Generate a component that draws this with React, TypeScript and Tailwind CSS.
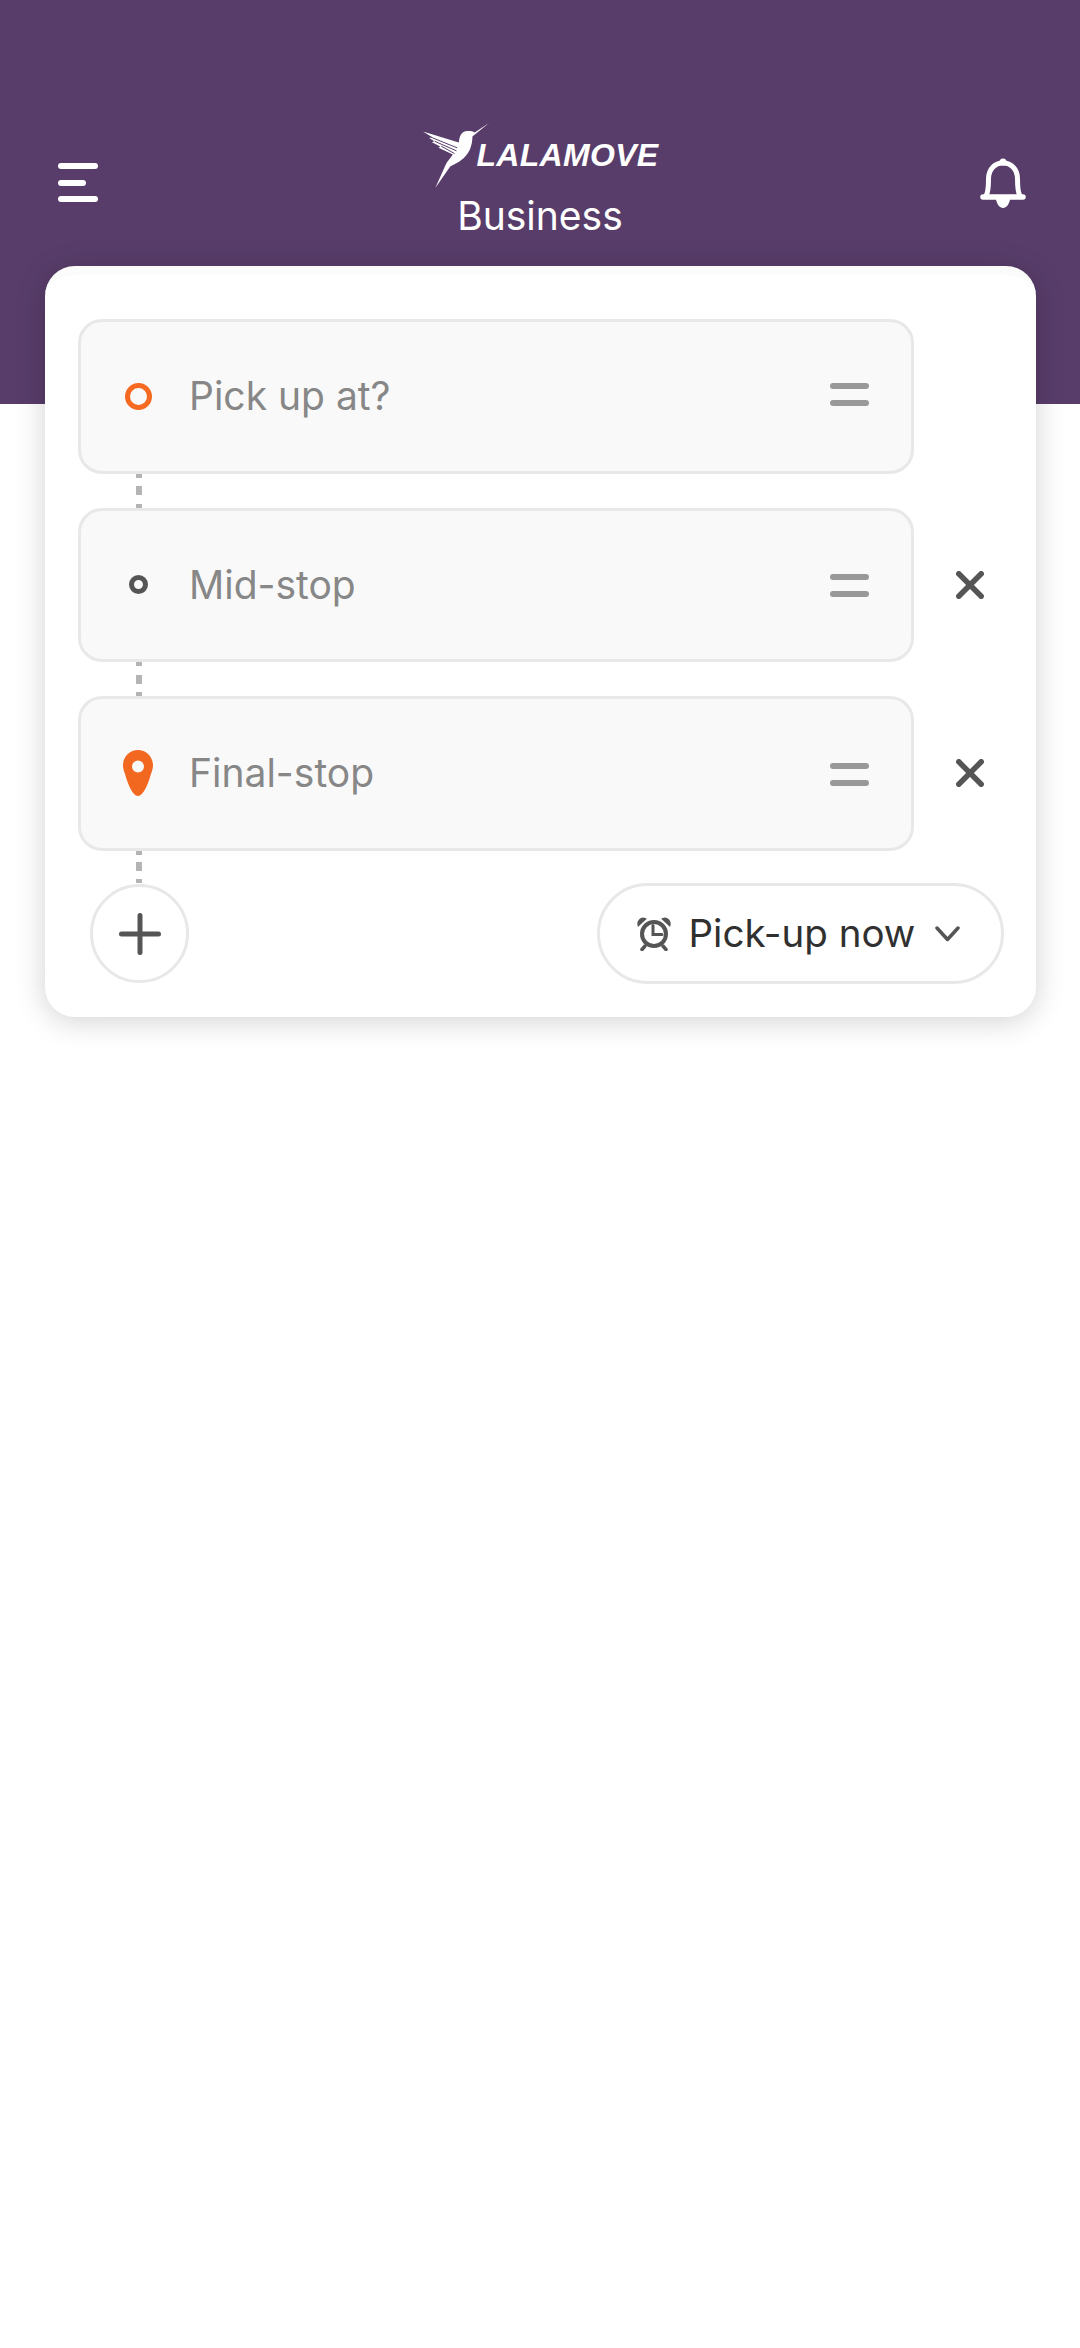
const placeholderColor = "text-[#878787]"

function Handle({ raised }: { raised?: boolean }) {
  return (
    <div className={`flex w-[39px] flex-col gap-[11px] ${raised ? "-mt-[4px]" : "mt-[2px]"}`}>
      <div className="h-[6px] rounded-full bg-[#999999]" />
      <div className="h-[6px] rounded-full bg-[#999999]" />
    </div>
  )
}

function CloseIcon() {
  return (
    <svg width="28" height="28" viewBox="0 0 28 28" fill="none" stroke="#555555" strokeWidth="5.500" strokeLinecap="round">
      <path d="M2.800 2.800 25.200 25.200M25.200 2.800 2.800 25.200" />
    </svg>
  )
}

function Pin() {
  return (
    <svg width="30" height="46" viewBox="0 0 30 46">
      <path
        d="M15 0C6.700 0 0 6.600 0 15.500C0 18.500 1 21 2.500 25.500C4.500 33 9.500 46 15 46C20.500 46 25.500 33 27.500 25.500C29 21 30 18.500 30 15.500C30 6.600 23.300 0 15 0Z"
        fill="#f36821"
      />
      <circle cx="15" cy="16.500" r="6" fill="#f9f9f9" />
    </svg>
  )
}

function Connector({ last }: { last?: boolean }) {
  return (
    <div className={`ml-[58px] flex w-[6px] flex-col justify-between ${last ? "h-[32.5px]" : "h-[34px]"}`}>
      <div className="h-[4px] bg-[#b4b4b4]" />
      <div className="h-[9px] bg-[#b4b4b4]" />
      <div className="h-[4px] bg-[#b4b4b4]" />
    </div>
  )
}

function StopRow({
  icon,
  label,
  removable,
  raised,
}: {
  icon: React.ReactNode
  label: string
  removable?: boolean
  raised?: boolean
}) {
  return (
    <div className="flex items-center">
      <div className="flex h-[154.5px] w-[836px] items-center rounded-[24px] border-[3px] border-[#e8e8e8] bg-[#f9f9f9] pr-[42px]">
        <div className="ml-[42px] mr-[36px] flex w-[30px] shrink-0 justify-center">{icon}</div>
        <span className={`flex-1 text-[39px] ${placeholderColor}`}>{label}</span>
        <Handle raised={raised} />
      </div>
      {removable && (
        <div className="ml-[42px]">
          <CloseIcon />
        </div>
      )}
    </div>
  )
}

function Bird() {
  return (
    <svg width="68" height="67" viewBox="120 35 205 200">
      <path
        d="M322 37 279 66C268 60 252 60 243 66C235 72 232 84 231 96L123 63 150 79 142 82 157 92 150 95 175 108 170 112 213 132C205 144 196 152 190 166L160 233 205 168C228 158 252 144 264 118C270 104 272 90 272 78Z"
        fill="#ffffff"
      />
      <path d="M145 79 226 112M158 92 224 121M178 107 218 129" stroke="#583d6a" strokeWidth="3" fill="none" />
    </svg>
  )
}

function Bell() {
  return (
    <svg width="46" height="50" viewBox="0 0 46 50" fill="none" stroke="#ffffff" strokeLinecap="round">
      <path
        d="M6 38C8.500 34 8.500 28 8.500 21C8.500 11 15 5 23 5C31 5 37.500 11 37.500 21C37.500 28 37.500 34 40 38"
        strokeWidth="5"
      />
      <path d="M3 39H43" strokeWidth="5.500" />
      <circle cx="23" cy="4" r="3.500" fill="#ffffff" stroke="none" />
      <path d="M16 40H30C30 46 26 50 23 50C20 50 16 46 16 40Z" fill="#ffffff" stroke="none" />
    </svg>
  )
}

function AlarmClock() {
  return (
    <svg width="34" height="34" viewBox="0 0 34 34" fill="none" stroke="#555555" strokeLinecap="round">
      <circle cx="17" cy="17" r="12" strokeWidth="4" />
      <path d="M16 8.500V17.500H25" strokeWidth="3" />
      <path d="M5 32.500 8 29M29 32.500 26 29" strokeWidth="3.500" />
      <path d="M1.500 8C0.500 4 4 0.500 8 2ZM32.500 8C33.500 4 30 0.500 26 2Z" fill="#555555" strokeWidth="2" />
    </svg>
  )
}

export default function App() {
  return (
    <div className="min-h-[2348px] bg-white font-['Inter',sans-serif]">
      <header className="h-[404px] bg-[#583d6a] px-[54px] pt-[122px]">
        <div className="grid grid-cols-[1fr_auto_1fr]">
          <div className="ml-[4px] flex w-[40px] flex-col gap-[10.5px] pt-[41px]">
            <div className="h-[6px] rounded-full bg-white" />
            <div className="h-[6px] w-[28px] rounded-full bg-white" />
            <div className="h-[6px] rounded-full bg-white" />
          </div>
          <div className="flex flex-col items-center">
            <div className="flex items-start">
              <Bird />
              <span className="-ml-[13px] mt-[15px] font-['Liberation_Sans',sans-serif] text-[32px] leading-[36px] font-bold italic tracking-[0.3px] text-white">
                LALAMOVE
              </span>
            </div>
            <span className="mt-[4px] text-[39px] leading-[46px] text-white">Business</span>
          </div>
          <div className="flex justify-end pt-[36px]">
            <Bell />
          </div>
        </div>
      </header>

      <main className="relative ml-[45px] mr-[44px] -mt-[138px] h-[751px] rounded-[30px] border-t-[9px] border-[#fbfbfb] bg-white pl-[33px] pr-[32px] pt-[44px] shadow-[0_4px_30px_rgba(0,0,0,0.18)]">
        <StopRow
          label="Pick up at?"
          raised
          icon={<div className="h-[27px] w-[27px] rounded-full border-[5px] border-[#f56a20]" />}
        />
        <Connector />
        <StopRow
          label="Mid-stop"
          removable
          icon={<div className="h-[19px] w-[19px] rounded-full border-[5px] border-[#555555]" />}
        />
        <Connector />
        <StopRow label="Final-stop" removable icon={<Pin />} />
        <Connector last />
        <div className="flex items-center justify-between">
          <button className="ml-[12px] flex h-[99px] w-[99px] items-center justify-center rounded-full border-[3px] border-[#e8e8e8] bg-white">
            <svg width="42" height="42" viewBox="0 0 42 42" stroke="#555555" strokeWidth="5" strokeLinecap="round">
              <path d="M21 2.500V39.500M2.500 21H39.500" />
            </svg>
          </button>
          <button className="flex h-[101px] w-[407px] items-center rounded-full border-[3px] border-[#e8e8e8] bg-white pl-[37px]">
            <AlarmClock />
            <span className="ml-[17.5px] text-[38.5px] text-[#303030]">Pick-up now</span>
            <svg className="ml-[20px]" width="25" height="16" viewBox="0 0 25 16" fill="none" stroke="#555555" strokeWidth="3.500" strokeLinecap="round" strokeLinejoin="round">
              <path d="M2 2 12.500 13.500 23 2" />
            </svg>
          </button>
        </div>
      </main>
    </div>
  )
}
